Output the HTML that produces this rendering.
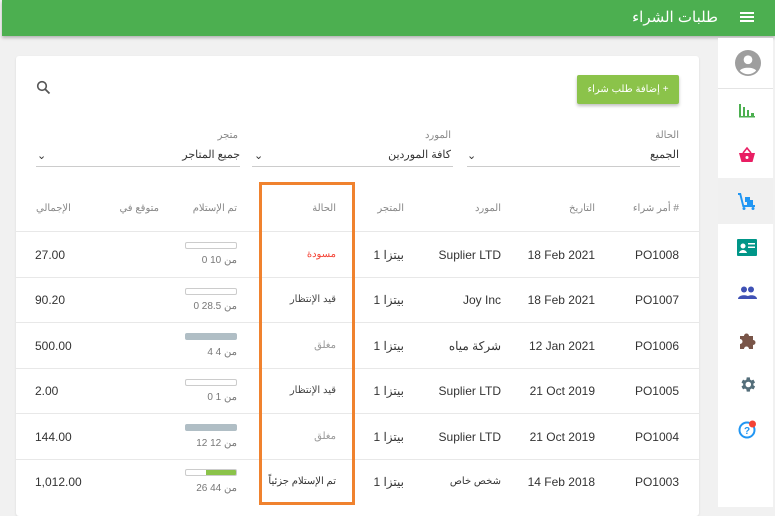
<!DOCTYPE html>
<html><head><meta charset="utf-8"><style>
*{margin:0;padding:0;box-sizing:border-box}
body{width:775px;height:507px;overflow:hidden;background:#f1f1f1;font-family:"Liberation Sans","Noto Sans CJK SC",sans-serif;position:relative;color:#333}
.a{position:absolute}
.hdr{left:2px;top:0;width:773px;height:36px;background:#4caf50;box-shadow:0 2px 3px rgba(0,0,0,.25)}
.card{left:16px;top:56px;width:683px;height:460px;background:#fff;border-radius:3px;box-shadow:0 1px 2px rgba(0,0,0,.1)}
.side{left:718px;top:38px;width:55px;height:469px;background:#fff}
.r{text-align:right;white-space:nowrap}
.t{font-size:12px;color:#333}
.h{font-size:10px;color:#888}
.line{height:1px;background:#e8e8e8;left:16px;width:683px}
.bar{width:52px;height:7px;border:1px solid #ccc;border-radius:2px;left:185px;background:#fff}
.sub{font-size:10px;color:#777}
</style></head><body>
<div class="a hdr"></div>
<div class="a r" style="right:57px;top:8px;font-size:15px;color:#fff">طلبات الشراء</div>
<div class="a" style="left:740px;top:12px;width:14px;height:2px;background:#fff;box-shadow:0 4px 0 #fff,0 8px 0 #fff"></div>

<div class="a card"></div>
<svg class="a" style="left:36px;top:80px" width="16" height="16" viewBox="0 0 16 16"><circle cx="6" cy="6" r="4.3" fill="none" stroke="#555" stroke-width="1.6"/><line x1="9" y1="9" x2="13.5" y2="13.5" stroke="#555" stroke-width="1.8"/></svg>
<div class="a" dir="rtl" style="left:577px;top:75px;width:102px;height:29px;background:#8bc34a;box-shadow:0 2px 3px rgba(0,0,0,.25);border-radius:2px;color:#fff;font-size:10px;text-align:center;line-height:29px">+ إضافة طلب شراء</div>

<div class="a r h" style="right:96px;top:130px">الحالة</div>
<div class="a r t" style="right:96px;top:148px;font-size:11px">الجميع</div>
<div class="a" style="left:467px;top:166px;width:213px;height:1px;background:#ccc"></div>
<div class="a t" style="left:467px;top:149px;font-size:11px">⌄</div>
<div class="a r h" style="right:324px;top:130px">المورد</div>
<div class="a r t" style="right:324px;top:148px;font-size:11px">كافة الموردين</div>
<div class="a" style="left:252px;top:166px;width:201px;height:1px;background:#ccc"></div>
<div class="a t" style="left:254px;top:149px;font-size:11px">⌄</div>
<div class="a r h" style="right:537px;top:130px">متجر</div>
<div class="a r t" style="right:535px;top:148px;font-size:11px">جميع المتاجر</div>
<div class="a" style="left:36px;top:166px;width:204px;height:1px;background:#ccc"></div>
<div class="a t" style="left:37px;top:149px;font-size:11px">⌄</div>

<div class="a r h" style="right:96px;top:203px">أمر شراء #</div>
<div class="a r h" style="right:180px;top:203px">التاريخ</div>
<div class="a r h" style="right:274px;top:203px">المورد</div>
<div class="a r h" style="right:371px;top:203px">المتجر</div>
<div class="a r h" style="right:439px;top:203px">الحالة</div>
<div class="a r h" style="right:538px;top:203px">تم الإستلام</div>
<div class="a r h" style="right:616px;top:203px">متوقع في</div>
<div class="a" style="left:36px;top:203px;font-size:10px;color:#888">الإجمالي</div>

<div class="a line" style="top:231px"></div>
<div class="a line" style="top:277px"></div>
<div class="a line" style="top:322px"></div>
<div class="a line" style="top:368px"></div>
<div class="a line" style="top:413px"></div>
<div class="a line" style="top:459px"></div>

<div class="a r t" style="right:96px;top:248px">PO1008</div><div class="a r t" style="right:180px;top:248px">18 Feb 2021</div><div class="a r t" style="right:274px;top:248px">Suplier LTD</div><div class="a r t" style="right:371px;top:248px">1 بيتزا</div><div class="a r" style="right:439px;top:249px;font-size:10px;color:#f44336">مسودة</div><div class="a bar" style="top:242px"></div><div class="a r sub" style="right:538px;top:255px">0 10 من</div><div class="a t" style="left:35px;top:248px">27.00</div>

<div class="a r t" style="right:96px;top:293px">PO1007</div><div class="a r t" style="right:180px;top:293px">18 Feb 2021</div><div class="a r t" style="right:274px;top:293px">Joy Inc</div><div class="a r t" style="right:371px;top:293px">1 بيتزا</div><div class="a r" style="right:439px;top:294px;font-size:10px;color:#444">قيد الإنتظار</div><div class="a bar" style="top:288px"></div><div class="a r sub" style="right:538px;top:301px">0 28.5 من</div><div class="a t" style="left:35px;top:293px">90.20</div>

<div class="a r t" style="right:96px;top:339px">PO1006</div><div class="a r t" style="right:180px;top:339px">12 Jan 2021</div><div class="a r t" style="right:274px;top:339px">شركة مياه</div><div class="a r t" style="right:371px;top:339px">1 بيتزا</div><div class="a r" style="right:439px;top:340px;font-size:10px;color:#999">مغلق</div><div class="a bar" style="top:333px;background:#b0bec5;border-color:#b0bec5"></div><div class="a r sub" style="right:538px;top:347px">4 4 من</div><div class="a t" style="left:35px;top:339px">500.00</div>

<div class="a r t" style="right:96px;top:384px">PO1005</div><div class="a r t" style="right:180px;top:384px">21 Oct 2019</div><div class="a r t" style="right:274px;top:384px">Suplier LTD</div><div class="a r t" style="right:371px;top:384px">1 بيتزا</div><div class="a r" style="right:439px;top:385px;font-size:10px;color:#444">قيد الإنتظار</div><div class="a bar" style="top:379px"></div><div class="a r sub" style="right:538px;top:392px">0 1 من</div><div class="a t" style="left:35px;top:384px">2.00</div>

<div class="a r t" style="right:96px;top:430px">PO1004</div><div class="a r t" style="right:180px;top:430px">21 Oct 2019</div><div class="a r t" style="right:274px;top:430px">Suplier LTD</div><div class="a r t" style="right:371px;top:430px">1 بيتزا</div><div class="a r" style="right:439px;top:431px;font-size:10px;color:#999">مغلق</div><div class="a bar" style="top:424px;background:#b0bec5;border-color:#b0bec5"></div><div class="a r sub" style="right:538px;top:438px">12 12 من</div><div class="a t" style="left:35px;top:430px">144.00</div>

<div class="a r t" style="right:96px;top:475px">PO1003</div><div class="a r t" style="right:180px;top:475px">14 Feb 2018</div><div class="a r" style="right:274px;top:476px;font-size:10px;color:#333">شخص خاص</div><div class="a r t" style="right:371px;top:475px">1 بيتزا</div><div class="a r" style="right:439px;top:476px;font-size:10px;color:#333">تم الإستلام جزئياً</div><div class="a bar" style="top:469px;background:linear-gradient(90deg,#fff 0 40%,#8bc34a 40%)"></div><div class="a r sub" style="right:538px;top:483px">26 44 من</div><div class="a t" style="left:35px;top:475px">1,012.00</div>

<div class="a" style="left:259px;top:182px;width:96px;height:323px;border:3px solid #f0822e"></div>

<div class="a side"></div>
<div class="a" style="left:718px;top:88px;width:55px;height:1px;background:#e4e4e4"></div>
<div class="a" style="left:718px;top:178px;width:55px;height:46px;background:#f0f0f0"></div>
<svg class="a" style="left:735px;top:50px" width="26" height="26" viewBox="0 0 24 24"><circle cx="12" cy="12" r="12" fill="#9e9e9e"/><circle cx="12" cy="9" r="4" fill="#fff"/><path d="M4.5 19c2-3.5 13-3.5 15 0a10 10 0 0 1-15 0z" fill="#fff"/></svg>
<svg class="a" style="left:738px;top:102px" width="18" height="16" viewBox="0 0 18 16"><g fill="#4caf50"><rect x="1" y="2" width="2" height="13"/><rect x="5" y="5" width="2" height="10"/><rect x="9" y="8" width="2" height="7"/><rect x="13" y="11" width="3" height="4"/><rect x="1" y="14" width="16" height="1.5"/></g></svg>
<svg class="a" style="left:738px;top:146px" width="18" height="18" viewBox="0 0 18 18"><path d="M5 7l4-5 4 5" fill="none" stroke="#e91e63" stroke-width="1.6"/><path d="M1 7h16l-2.5 9h-11z" fill="#e91e63"/><circle cx="9" cy="11.5" r="1.5" fill="#fff"/></svg>
<svg class="a" style="left:737px;top:191px" width="20" height="20" viewBox="0 0 20 20"><g fill="#2196f3"><path d="M1 2h3l3 12h11v2H5.5L2.5 4H1z"/><rect x="8" y="6" width="5" height="5"/><rect x="10" y="9" width="6" height="5"/><circle cx="7" cy="17.5" r="1.5"/><circle cx="16" cy="17.5" r="1.5"/></g></svg>
<svg class="a" style="left:737px;top:239px" width="20" height="18" viewBox="0 0 20 18"><rect width="20" height="17" rx="1" fill="#009688"/><circle cx="6" cy="7" r="2.5" fill="#fff"/><path d="M2 14c1-4 7-4 8 0z" fill="#fff"/><rect x="11" y="4" width="7" height="1.5" fill="#fff"/><rect x="11" y="7.5" width="7" height="1.5" fill="#fff"/></svg>
<svg class="a" style="left:738px;top:286px" width="19" height="14" viewBox="0 0 19 14"><g fill="#3f51b5"><circle cx="6" cy="3.5" r="3"/><circle cx="13" cy="3.5" r="3"/><path d="M0 13c0-5 12-5 12 0z"/><path d="M8 13c0-5 11-5 11 0z"/></g></svg>
<svg class="a" style="left:737px;top:330px" width="20" height="20" viewBox="0 0 20 20"><path d="M3 6h4a2.5 2.5 0 1 1 5 0h4v4a2.5 2.5 0 1 1 0 5v4h-4a2.5 2.5 0 1 0-5 0H3v-5a2.5 2.5 0 1 0 0-5z" fill="#795548"/></svg>
<svg class="a" style="left:738px;top:375px" width="19" height="19" viewBox="0 0 24 24"><path fill="#546e7a" d="M19.4 13a7.5 7.5 0 0 0 0-2l2.1-1.6-2-3.5-2.5 1a7 7 0 0 0-1.7-1L15 3h-4l-.4 2.9a7 7 0 0 0-1.7 1l-2.5-1-2 3.5L6.6 11a7.5 7.5 0 0 0 0 2l-2.2 1.6 2 3.5 2.5-1a7 7 0 0 0 1.7 1L11 21h4l.4-2.9a7 7 0 0 0 1.7-1l2.5 1 2-3.5zM13 15.5a3.5 3.5 0 1 1 0-7 3.5 3.5 0 0 1 0 7z"/></svg>
<svg class="a" style="left:738px;top:419px" width="20" height="20" viewBox="0 0 20 20"><circle cx="9" cy="11" r="7.5" fill="none" stroke="#2196f3" stroke-width="2"/><text x="9" y="15" font-size="10" font-weight="bold" text-anchor="middle" fill="#2196f3" font-family="Liberation Sans">?</text><circle cx="14.5" cy="5" r="3.5" fill="#f44336"/></svg>
</body></html>
